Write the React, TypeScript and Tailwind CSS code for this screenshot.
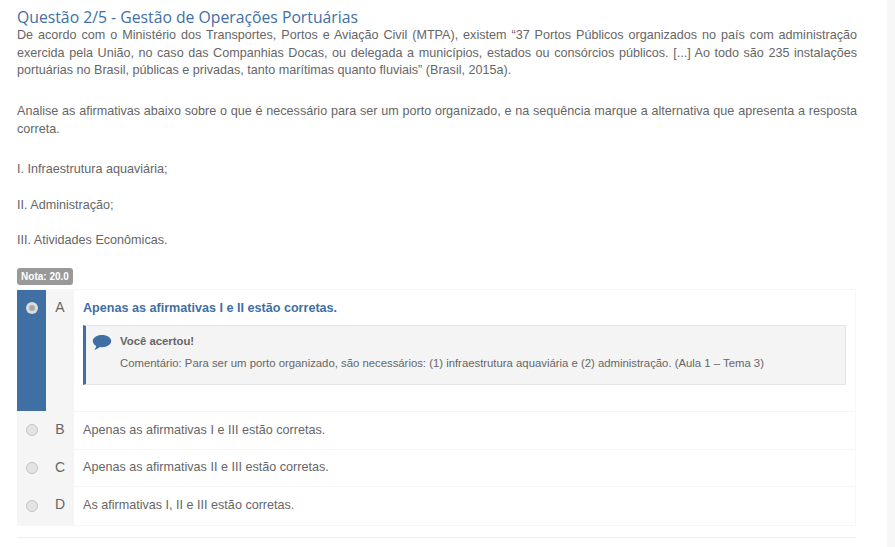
const options = [
  { letter: "B", text: "Apenas as afirmativas I e III estão corretas." },
  { letter: "C", text: "Apenas as afirmativas II e III estão corretas." },
  { letter: "D", text: "As afirmativas I, II e III estão corretas." },
];

function Radio({ checked }: { checked?: boolean }) {
  return (
    <span className={checked
      ? "flex h-[12px] w-[12px] items-center justify-center rounded-full bg-[#dcdcdc]"
      : "flex h-[12px] w-[12px] items-center justify-center rounded-full border border-[#c4c4c4] bg-[#e4e4e4]"}>
      {checked && <span className="h-[6px] w-[6px] rounded-full bg-[#a8a8a8]" />}
    </span>
  );
}

export default function App() {
  return (
    <div className="flex h-[547px] w-[895px] overflow-hidden bg-white font-['Liberation_Sans',Arial,sans-serif] text-[12.6px] leading-[17.64px] text-[#666666]">
      <main className="w-[870px] pl-[17px] pt-[8px]">
        <h3 className="font-['Open_Sans',sans-serif] text-[15.75px] leading-[19px] text-[#3f6fa3]">
          Questão 2/5 - Gestão de Operações Portuárias
        </h3>
        <div className="w-[840px] text-justify">
          <p>
            De acordo com o Ministério dos Transportes, Portos e Aviação Civil (MTPA), existem “37 Portos Públicos organizados no país com administração exercida pela União, no caso das Companhias Docas, ou delegada a municípios, estados ou consórcios públicos. [...] Ao todo são 235 instalações portuárias no Brasil, públicas e privadas, tanto marítimas quanto fluviais” (Brasil, 2015a).
          </p>
          <p className="mt-[17.5px] pt-[6px]">
            Analise as afirmativas abaixo sobre o que é necessário para ser um porto organizado, e na sequência marque a alternativa que apresenta a resposta correta.
          </p>
          <p className="mt-[22.5px]">I. Infraestrutura aquaviária;</p>
          <p className="mt-[18px]">II. Administração;</p>
          <p className="mt-[18px]">III. Atividades Econômicas.</p>
        </div>

        <span className="mt-[18px] block h-[17px] w-[56px] rounded-[3px] bg-[#999999] text-center text-[10px] font-bold leading-[17px] text-white">
          Nota: 20.0
        </span>

        <div className="mt-[4px] w-[839px] border-b border-r border-t border-[#f7f7f7]">
          <div className="flex h-[122px] border-b border-[#f5f5f5]">
            <div className="flex w-[29px] shrink-0 justify-center bg-[#3f6fa3] pt-[12px]">
              <Radio checked />
            </div>
            <div className="w-[28px] shrink-0 bg-[#f5f5f5] pt-[9px] text-center text-[14px] leading-[17.5px]">A</div>
            <div className="flex-1 pl-[9px] pr-[9px] pt-[10px]">
              <p className="text-[12.6px] font-bold leading-[17.64px] text-[#3f6fa3]">Apenas as afirmativas I e II estão corretas.</p>
              <div className="mt-[7.4px] flex h-[60px] border border-l-[3px] border-[#e5e5e5] border-l-[#3f6fa3] bg-[#f4f4f4] pl-[6px] pt-[7px]">
                <svg viewBox="0 0 20 18" className="mt-[1px] h-[18px] w-[20px] shrink-0 fill-[#3f6fa3]">
                  <path d="M10 1C4.8 1 .8 3.6.8 7.1c0 2 1.3 3.8 3.4 4.9-.2 1.4-1 2.7-1.9 3.7 1.9-.2 3.9-1.2 5.4-2.7.8.1 1.5.2 2.3.2 5.2 0 9.2-2.7 9.2-6.1S15.2 1 10 1z" />
                </svg>
                <div className="ml-[8px]">
                  <p className="text-[11.34px] font-bold leading-[17px]">Você acertou!</p>
                  <p className="mt-[5px] text-[11.34px] leading-[17px]">
                    Comentário: Para ser um porto organizado, são necessários: (1) infraestrutura aquaviária e (2) administração. (Aula 1 – Tema 3)
                  </p>
                </div>
              </div>
            </div>
          </div>
          {options.map((o) => (
            <div key={o.letter} className="flex h-[37.5px] border-b border-[#f7f7f7] last:border-b-0">
              <div className="flex w-[29px] shrink-0 items-center justify-center bg-[#f5f5f5]">
                <Radio />
              </div>
              <div className="w-[28px] shrink-0 bg-[#f5f5f5] pt-[9px] text-center text-[14px] leading-[17.5px]">{o.letter}</div>
              <p className="pl-[9px] pt-[9.5px]">{o.text}</p>
            </div>
          ))}
        </div>

        <div className="mt-[11px] h-px w-[839px] bg-[#eeeeee]" />
      </main>
      <div className="flex-1" />
      <aside className="w-[8px] bg-[#f7f7f7]" />
    </div>
  );
}
